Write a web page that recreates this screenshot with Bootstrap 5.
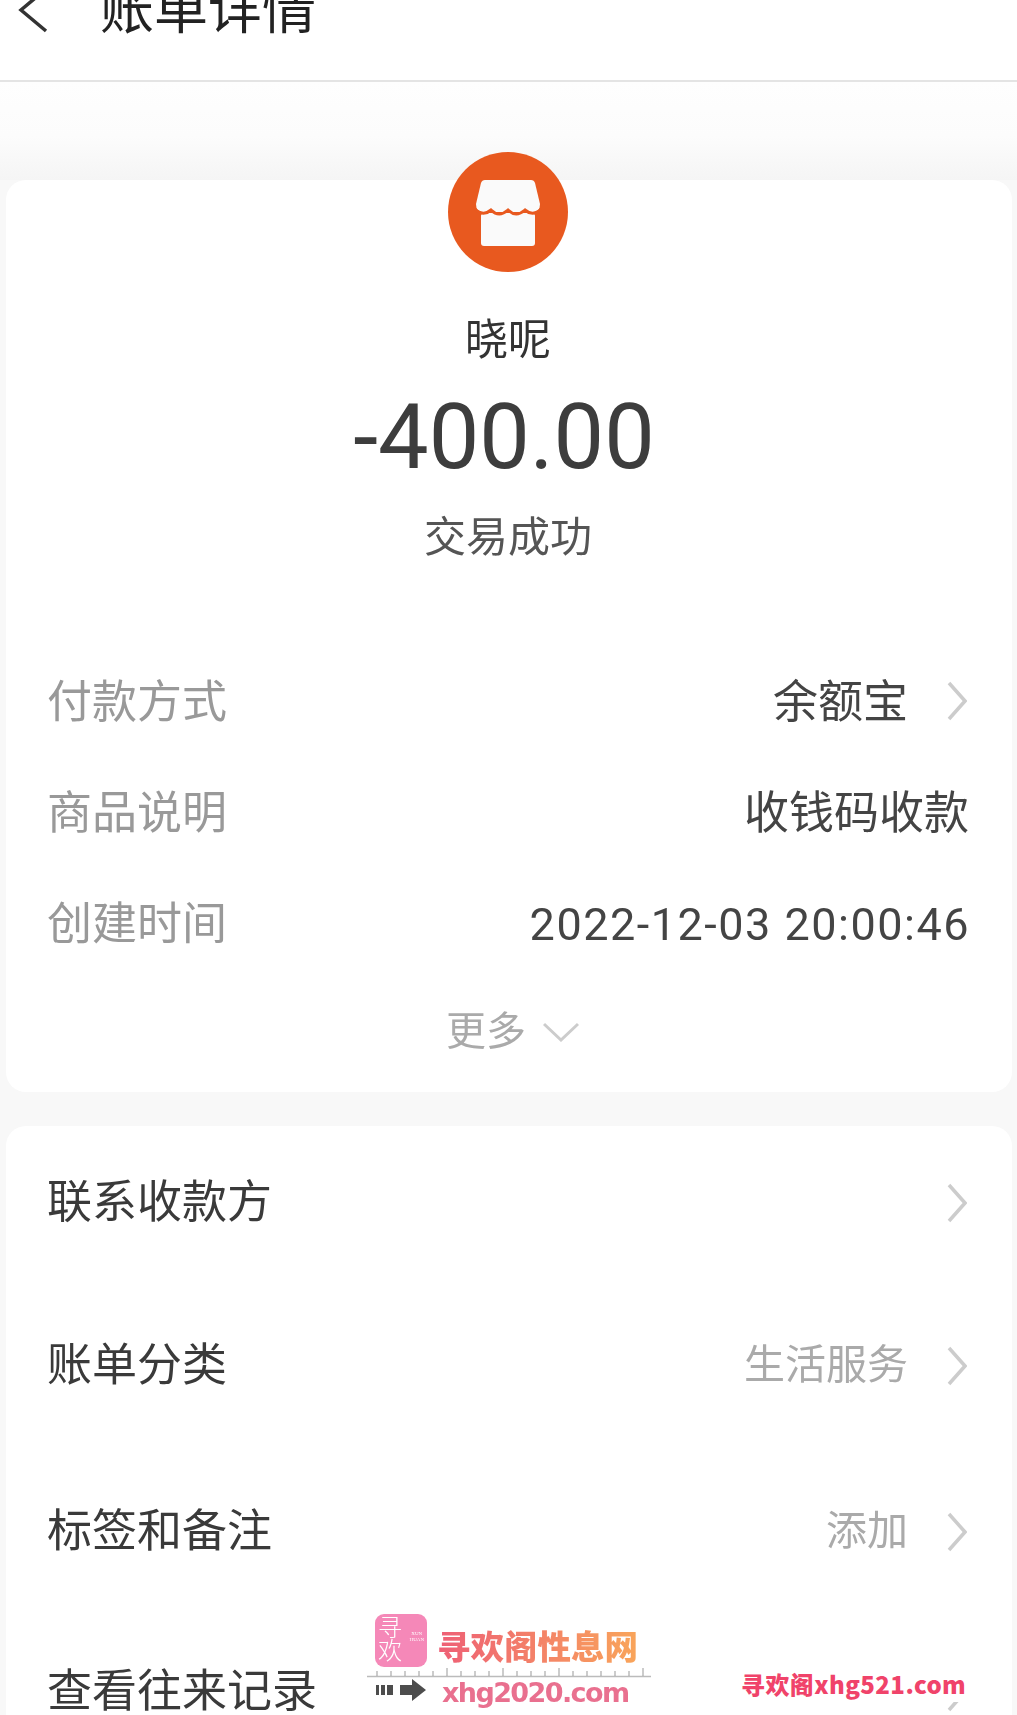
<!DOCTYPE html>
<html lang="zh-CN">
<head>
<meta charset="utf-8">
<title>账单详情</title>
<link href="https://cdn.jsdelivr.net/npm/bootstrap@5.3.0/dist/css/bootstrap.min.css" rel="stylesheet">
<style>
html,body{height:1715px;overflow:hidden;}
body{position:relative;background:#f8f8f8;color:#333;font-family:Roboto,"Noto Sans CJK SC",sans-serif;font-size:45px;filter:blur(.4px);}
.top-head{height:82px;background:#fff;border-bottom:2px solid #e4e4e4;padding:0 0 42px 18px;gap:52px;}
.back-arrow{margin-bottom:5px;flex:none;}
.top-title{font-size:54px;line-height:54px;color:#222;}
.band{height:98px;background:linear-gradient(#fefefe 0,#fcfcfc 55%,#f5f5f5 100%);}
.sheet{background:#fff;border-radius:20px;margin:0 5px 0 6px;padding:0 43px 0 41px;}
.sheet-one{height:912px;margin-bottom:34px;}
.sheet-two{padding-top:2px;}
.shop-icon{width:120px;height:120px;margin-top:-28px;margin-bottom:38px;display:block;}
.payee{font-size:43px;line-height:60px;color:#333;margin-bottom:18px;}
.amount{font-size:90px;line-height:100px;color:#3d3d3d;margin-bottom:22px;padding-right:8px;}
.status{font-size:42px;line-height:56px;color:#555;margin-bottom:81px;}
.info-row{height:111px;}
.info-label{color:#999;}
.info-value{color:#444;}
.stamp{font-size:45px;letter-spacing:1.5px;margin-right:-1px;}
.more-row{height:102px;color:#aaa;font-size:40px;gap:17px;padding-left:9px;padding-top:1px;}
.link-row{height:150px;margin-bottom:13px;color:#3a3a3a;}
.third-link{margin-top:16px;margin-bottom:10px;}
.soft-value{color:#aaa;font-size:41px;}
.chev{width:20px;height:40px;flex:none;margin-left:39px;margin-right:2px;}
.chev-up{margin-bottom:4px;}
.mark-left{position:absolute;left:367px;top:1612px;width:284px;height:103px;}
.mark-badge{position:absolute;left:8px;top:2px;width:52px;height:53px;border-radius:9px;background:#f588b8;color:#fff;padding:3px 3px 0 3px;font-weight:300;}
.badge-main{font-size:24px;line-height:23px;width:24px;}
.badge-tiny{font-size:5px;line-height:6px;font-family:"Liberation Serif",serif;text-align:center;margin-top:14px;}
.mark-name{position:absolute;left:70px;top:13px;font-size:33.5px;line-height:40px;font-weight:900;white-space:nowrap;font-family:"Noto Sans CJK SC",sans-serif;background:linear-gradient(90deg,#ee5f76,#f9a55a);-webkit-background-clip:text;background-clip:text;color:transparent;}
.mark-rule{position:absolute;left:0;top:56px;width:284px;height:10px;}
.mark-arrow{position:absolute;left:9px;top:67px;width:50px;height:22px;}
.mark-url{position:absolute;left:75px;top:64px;font-size:27px;line-height:34px;font-weight:900;color:#e9708f;white-space:nowrap;font-family:"DejaVu Sans",sans-serif;letter-spacing:-1.6px;}
.mark-right{position:absolute;left:735px;top:1666px;width:240px;height:36px;background:#fff;color:#f0436a;font-size:24px;line-height:36px;font-weight:900;white-space:nowrap;padding-left:6px;font-family:"Noto Sans CJK SC",sans-serif;letter-spacing:.4px;}
</style>
</head>
<body>
<header class="top-head d-flex align-items-end">
  <svg class="back-arrow" width="30" height="46" viewBox="0 0 30 46" fill="none" stroke="#333" stroke-width="3.5"><path d="M28 2 L3 23 L28 44"/></svg>
  <div class="top-title">账单详情</div>
</header>
<div class="band"></div>

<section class="sheet sheet-one d-flex flex-column">
  <div class="d-flex flex-column align-items-center">
    <svg class="shop-icon" viewBox="0 0 120 120">
      <circle cx="60" cy="60" r="60" fill="#e8591f"/>
      <path d="M37 28 H83 Q86 28 87 31 L92 52 Q92 60 85 60 H35 Q28 60 28 52 L33 31 Q34 28 37 28Z" fill="#fafafa"/>
      <rect x="33" y="61" width="54" height="33" rx="3" fill="#fafafa"/>
      <path d="M27 57 Q35 65 43 58 Q51 66 60 58 Q68 66 77 58 Q85 65 93 57" fill="none" stroke="#e8591f" stroke-width="3"/>
    </svg>
    <div class="payee">晓呢</div>
    <div class="amount">-400.00</div>
    <div class="status">交易成功</div>
  </div>
  <div class="info-row d-flex justify-content-between align-items-center">
    <span class="info-label">付款方式</span>
    <span class="d-flex align-items-center"><span class="info-value">余额宝</span>
      <svg class="chev chev-up" viewBox="0 0 20 40" fill="none" stroke="#ccc" stroke-width="3.5"><path d="M2 2 L18 20 L2 38"/></svg></span>
  </div>
  <div class="info-row d-flex justify-content-between align-items-center">
    <span class="info-label">商品说明</span><span class="info-value">收钱码收款</span>
  </div>
  <div class="info-row d-flex justify-content-between align-items-center">
    <span class="info-label">创建时间</span><span class="info-value stamp">2022-12-03 20:00:46</span>
  </div>
  <div class="more-row d-flex justify-content-center align-items-center">
    <span>更多</span>
    <svg width="36" height="20" viewBox="0 0 36 20" fill="none" stroke="#ccc" stroke-width="3"><path d="M1 2 L18 18 L35 2"/></svg>
  </div>
</section>

<section class="sheet sheet-two">
  <div class="link-row d-flex justify-content-between align-items-center">
    <span>联系收款方</span>
    <svg class="chev" viewBox="0 0 20 40" fill="none" stroke="#ccc" stroke-width="3.5"><path d="M2 2 L18 20 L2 38"/></svg>
  </div>
  <div class="link-row d-flex justify-content-between align-items-center">
    <span>账单分类</span>
    <span class="d-flex align-items-center"><span class="soft-value">生活服务</span>
      <svg class="chev" viewBox="0 0 20 40" fill="none" stroke="#ccc" stroke-width="3.5"><path d="M2 2 L18 20 L2 38"/></svg></span>
  </div>
  <div class="link-row third-link d-flex justify-content-between align-items-center">
    <span>标签和备注</span>
    <span class="d-flex align-items-center"><span class="soft-value">添加</span>
      <svg class="chev" viewBox="0 0 20 40" fill="none" stroke="#ccc" stroke-width="3.5"><path d="M2 2 L18 20 L2 38"/></svg></span>
  </div>
  <div class="link-row d-flex justify-content-between align-items-center">
    <span>查看往来记录</span>
    <svg class="chev" viewBox="0 0 20 40" fill="none" stroke="#ccc" stroke-width="3.5"><path d="M2 2 L18 20 L2 38"/></svg>
  </div>
</section>

<div class="mark-left">
  <div class="mark-badge d-flex justify-content-between"><span class="badge-main">寻欢</span><span class="badge-tiny">XUN<br>HUAN</span></div>
  <div class="mark-name">寻欢阁性息网</div>
  <svg class="mark-rule" viewBox="0 0 284 10"><path d="M0 8.5 H284" stroke="#bbb" stroke-width="1.5"/><path d="M10 8V3M24 8V3M38 8V3M52 8V3M66 8V3M80 8V0M94 8V3M108 8V3M122 8V3M136 8V0M150 8V3M164 8V3M178 8V3M192 8V0M206 8V3M220 8V3M234 8V3M248 8V3M262 8V3M276 8V0" stroke="#999" stroke-width="1"/></svg>
  <svg class="mark-arrow" viewBox="0 0 50 22" fill="#4d4d4d"><rect x="0" y="6" width="3" height="10"/><rect x="5" y="6" width="4" height="10"/><rect x="11" y="6" width="6" height="10"/><path d="M24 6 H36 V0 L50 11 L36 22 V16 H24Z"/></svg>
  <div class="mark-url">xhg2020.com</div>
</div>
<div class="mark-right">寻欢阁xhg521.com</div>
</body>
</html>
